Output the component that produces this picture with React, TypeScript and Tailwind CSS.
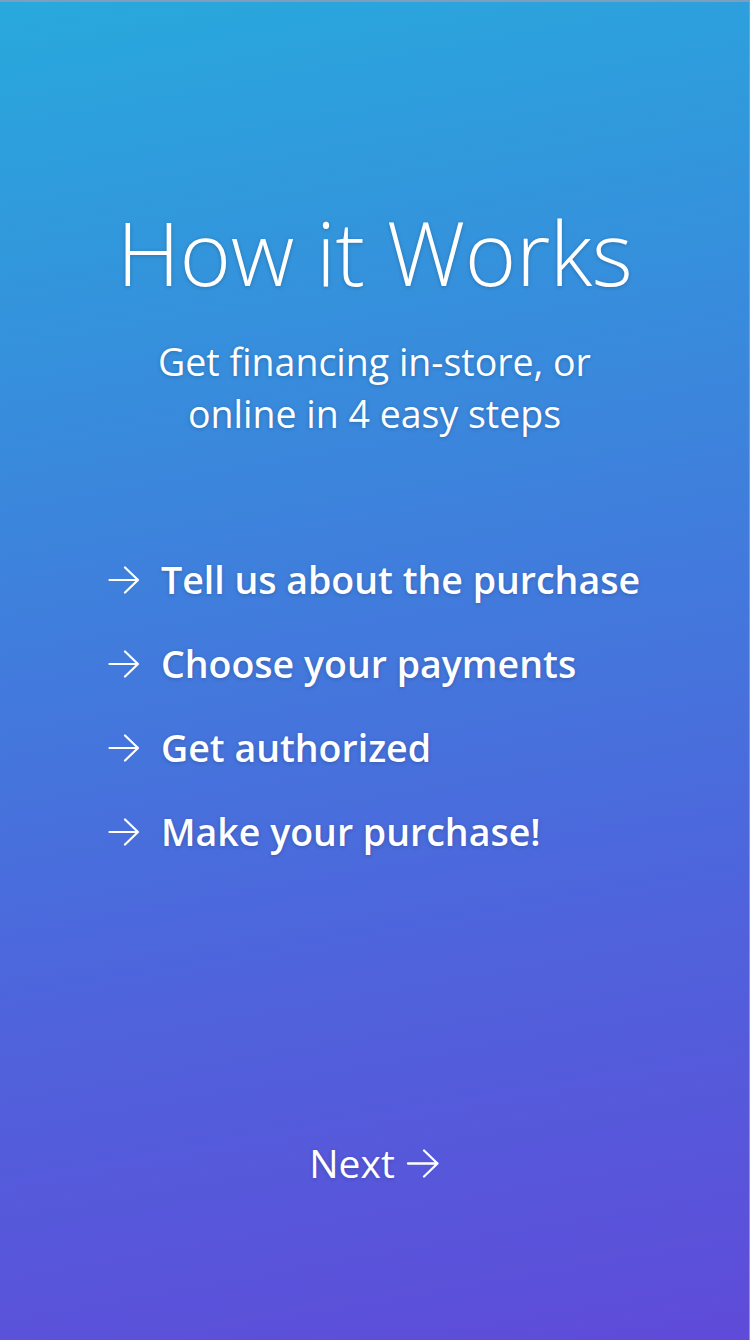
import React from "react";

function Arrow({ className }: { className?: string }) {
  return (
    <svg viewBox="0 0 32 28" className={className} fill="none" stroke="white" strokeWidth={2.2} strokeLinecap="round" strokeLinejoin="round">
      <path d="M1.5 14H30M17 1.5L30 14L17 26.5" />
    </svg>
  );
}

export default function App() {
  const items = [
    "Tell us about the purchase",
    "Choose your payments",
    "Get authorized",
    "Make your purchase!",
  ];
  return (
    <div
      className="w-[750px] h-[1340px] flex flex-col items-center text-white border-t-2 border-r border-[#7d9fbd] bg-[linear-gradient(170deg,#28a9dc_0%,#3b86dc_35%,#4f63dc_70%,#5f4bd9_100%)] [text-shadow:0_1px_4px_rgba(0,0,0,0.2)]"
      style={{ fontFamily: '"Open Sans", sans-serif' }}
    >
      <h1 className="mt-[190px] text-[88px] font-light leading-[120px] tracking-[-0.5px]">How it Works</h1>
      <p className="mt-[24px] text-[37.5px] font-normal leading-[52px] text-center">
        Get financing in-store, or
        <br />
        online in 4 easy steps
      </p>
      <ul className="mt-[115px] self-start ml-[108px] flex flex-col gap-[34px]">
        {items.map((t) => (
          <li key={t} className="flex items-center h-[50px]">
            <Arrow className="w-[32px] h-[28px] mr-[21px]" />
            <span className="text-[37.5px] font-semibold leading-[50px]">{t}</span>
          </li>
        ))}
      </ul>
      <div className="mt-auto mb-[152px] flex items-center">
        <span className="text-[39px] font-normal leading-[50px]">Next</span>
        <Arrow className="w-[34px] h-[29px] ml-[11px]" />
      </div>
    </div>
  );
}
